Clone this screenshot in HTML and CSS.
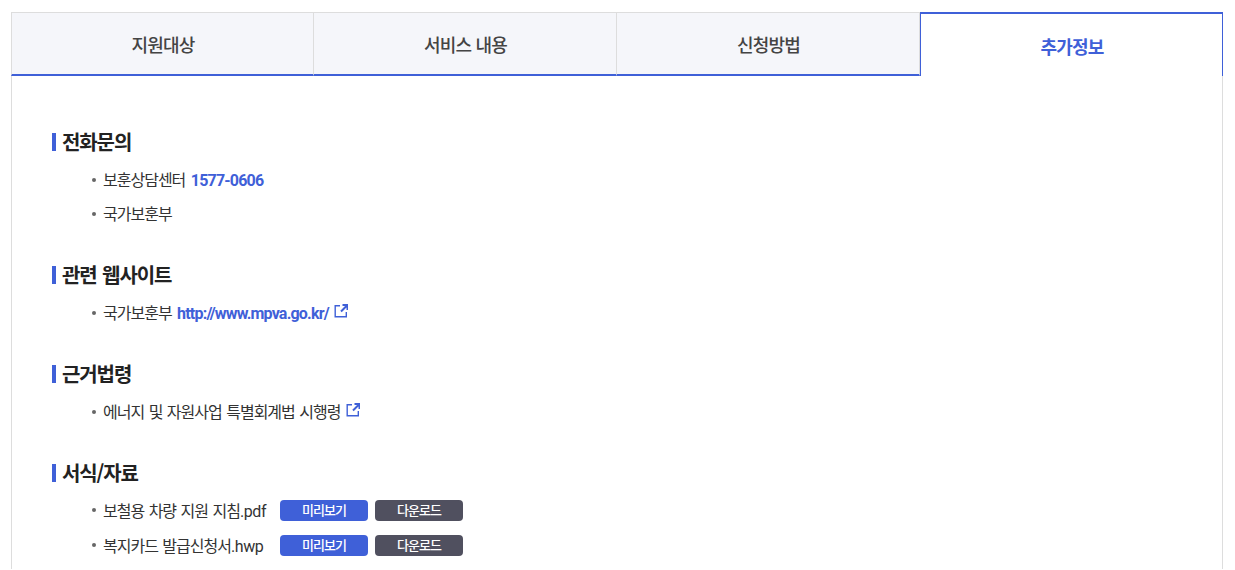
FILE: index.html
```html
<!DOCTYPE html>
<html lang="ko">
<head>
  <meta charset="UTF-8">
  <meta name="viewport" content="width=device-width, initial-scale=1.0">
  <title>추가정보</title>
  <link rel="stylesheet" href="styles.css">
</head>
<body>

  <div class="wrap">
    <ul class="tabs">
      <li class="tab">지원대상</li>
      <li class="tab">서비스 내용</li>
      <li class="tab">신청방법</li>
      <li class="tab active">추가정보</li>
    </ul>

    <div class="panel">
      <section class="block">
        <h3 class="title">전화문의</h3>
        <ul class="list">
          <li>보훈상담센터 <a class="tel" href="#">1577-0606</a></li>
          <li>국가보훈부</li>
        </ul>
      </section>

      <section class="block">
        <h3 class="title">관련 웹사이트</h3>
        <ul class="list">
          <li>국가보훈부 <a class="link" href="#">http://www.mpva.go.kr/</a>
            <svg class="ext" viewBox="0 0 14 14"><path class="box" d="M6 1.7H1.2v11.1h11.1V8"/><path class="arrow" d="M8.5 1h5v5M13 1.5L7 7.5"/></svg>
          </li>
        </ul>
      </section>

      <section class="block">
        <h3 class="title">근거법령</h3>
        <ul class="list">
          <li>에너지 및 자원사업 특별회계법 시행령
            <svg class="ext" viewBox="0 0 14 14"><path class="box" d="M6 1.7H1.2v11.1h11.1V8"/><path class="arrow" d="M8.5 1h5v5M13 1.5L7 7.5"/></svg>
          </li>
        </ul>
      </section>

      <section class="block">
        <h3 class="title">서식/자료</h3>
        <ul class="list files">
          <li>
            <span class="fname">보철용 차량 지원 지침<span class="latin">.pdf</span></span>
            <a class="btn blue" href="#">미리보기</a>
            <a class="btn dark" href="#">다운로드</a>
          </li>
          <li>
            <span class="fname">복지카드 발급신청서<span class="latin">.hwp</span></span>
            <a class="btn blue" href="#">미리보기</a>
            <a class="btn dark" href="#">다운로드</a>
          </li>
        </ul>
      </section>
    </div>
  </div>

</body>
</html>
```

FILE: styles.css
```css
html { height: 100%; overflow: hidden; }
body { margin: 0; height: 570px; overflow: hidden; background-color: #fff; color: #222; font-family: "Noto Sans CJK KR", "Noto Sans", sans-serif; letter-spacing: -0.05em; }
ul { list-style: none; margin: 0; padding: 0; }
a { text-decoration: none; }

.wrap { margin: 12px 12px 0 11px; }

.tabs { display: flex; height: 64px; }
.tab {
  flex: 0 0 303px;
  display: flex;
  align-items: center;
  justify-content: center;
  box-sizing: border-box;
  padding: 1px 0 0 1px;
  background-color: #f5f6fa;
  border-top: 1px solid #ddd;
  border-right: 1px solid #ddd;
  border-bottom: 2px solid #3f60d8;
  font-size: 18px;
  font-weight: 500;
  color: #444;
}
.tab:first-child { border-left: 1px solid #ddd; }
.tab.active {
  background-color: #fff;
  border: 1px solid #3f60d8;
  border-top-width: 2px;
  border-bottom: none;
  color: #3f60d8;
  font-weight: 700;
}

.panel {
  border-left: 1px solid #ddd;
  border-right: 1px solid #ddd;
  padding: 52px 40px 12px;
}

.block { margin-bottom: 36px; }
.block:last-child { margin-bottom: 0; }
.title {
  margin: 0 0 11px;
  padding-left: 10px;
  font-size: 20px;
  letter-spacing: -1.1px;
  word-spacing: 1px;
  line-height: 28px;
  font-weight: 700;
  color: #222;
  position: relative;
}
.title::before {
  content: "";
  position: absolute;
  left: 0;
  top: 5px;
  width: 4px;
  height: 18px;
  background-color: #3f60d8;
}

.list li {
  position: relative;
  padding-left: 51px;
  font-size: 16px;
  letter-spacing: -1px;
  word-spacing: 1px;
  line-height: 24px;
  margin-bottom: 10px;
  color: #333;
}
.list li::before {
  content: "";
  position: absolute;
  left: 40px;
  top: 11px;
  width: 4px;
  height: 4px;
  border-radius: 50%;
  background-color: #666;
}
.list li:last-child { margin-bottom: 0; }

.latin, .tel, .link { font-family: Roboto, sans-serif; line-height: 1; letter-spacing: -0.8px; }
.latin { letter-spacing: -0.4px; }
.tel, .link { margin-left: 1px; color: #3f60d8; font-weight: 700; }
.ext { width: 14px; height: 14px; margin-left: 1px; fill: none; stroke: #3f60d8; vertical-align: 1px; }
.ext .box { stroke-width: 1.4; }
.ext .arrow { stroke-width: 2; }

.files li { display: flex; align-items: center; height: 24px; margin-bottom: 11px; }
.files li::before { top: 10px; }
.fname { width: 177px; }
.btn {
  width: 88px;
  height: 21px;
  margin-right: 7px;
  border-radius: 4px;
  display: flex;
  align-items: center;
  justify-content: center;
  font-size: 13px;
  font-weight: 500;
  color: #fff;
}
.btn.blue { background-color: #3f60d8; }
.btn.dark { background-color: #50505f; }
```
